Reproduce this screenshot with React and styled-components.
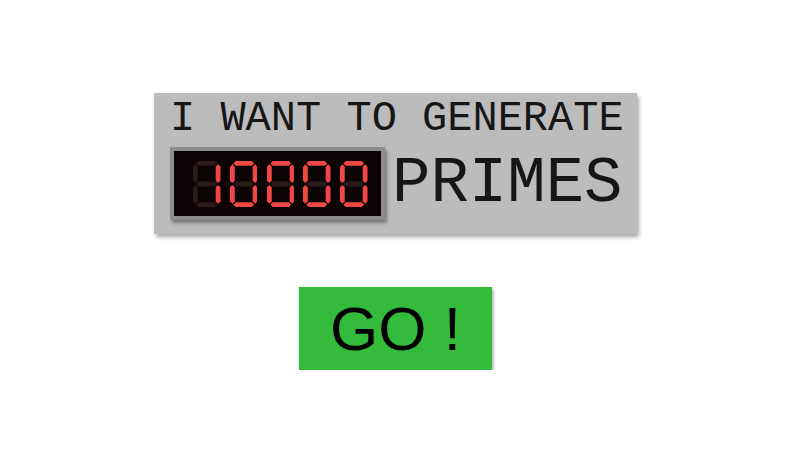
import React from 'react';
import styled, { createGlobalStyle } from 'styled-components';

const GlobalStyle = createGlobalStyle`
  body {
    margin: 0;
    background: #ffffff;
  }
`;

const Page = styled.div`
  width: 791px;
  padding-top: 93px;
  display: flex;
  flex-direction: column;
  align-items: center;
`;

const Panel = styled.div`
  width: 483px;
  box-sizing: border-box;
  padding: 5px 13px 14px 16px;
  background: #bdbcbd;
  box-shadow: 2px 3px 4px rgba(0, 0, 0, 0.35);
  font-family: "Liberation Mono", "Courier New", monospace;
  color: #161616;
`;

const Headline = styled.div`
  font-size: 42px;
  line-height: 42px;
  white-space: pre;
`;

const CountRow = styled.div`
  display: flex;
  align-items: center;
  gap: 7px;
  margin-top: 7px;
`;

const Display = styled.div`
  width: 215px;
  height: 73px;
  box-sizing: border-box;
  border: 4px solid #8e8c8d;
  background: #0c0404;
  box-shadow: 2px 3px 3px rgba(0, 0, 0, 0.35);
  display: flex;
  align-items: center;
  gap: 9.25px;
  padding-left: 19px;
`;

const Unit = styled.div`
  font-size: 64px;
  line-height: 64px;
`;

const GoButton = styled.button`
  margin-top: 53px;
  width: 193px;
  height: 83px;
  border: none;
  padding: 0;
  background: #35bb3b;
  box-shadow: 1px 2px 3px rgba(0, 0, 0, 0.4);
  display: flex;
  align-items: center;
  justify-content: center;
  font-family: "Liberation Sans", Arial, sans-serif;
  font-size: 62px;
  line-height: 1;
  color: #000;
  white-space: pre;
  cursor: pointer;
`;

// seven-segment glyph: a b c d e f g
const SEGMENTS = {
  0: 'abcdef',
  1: 'bc',
  2: 'abdeg',
  3: 'abcdg',
  4: 'bcfg',
  5: 'acdfg',
  6: 'acdefg',
  7: 'abc',
  8: 'abcdefg',
  9: 'abcdfg',
};

const W = 27.5;
const H = 46;
const T = 4.8;
const C = T / 2;
const G = 0.9;

const horiz = (x1, x2, y) =>
  `${x1 + G},${y} ${x1 + G + C},${y - C} ${x2 - G - C},${y - C} ${x2 - G},${y} ${x2 - G - C},${y + C} ${x1 + G + C},${y + C}`;

const vert = (x, y1, y2) =>
  `${x},${y1 + G} ${x + C},${y1 + G + C} ${x + C},${y2 - G - C} ${x},${y2 - G} ${x - C},${y2 - G - C} ${x - C},${y1 + G + C}`;

const SHAPES = {
  a: horiz(C, W - C, C),
  b: vert(W - C, C, H / 2),
  c: vert(W - C, H / 2, H - C),
  d: horiz(C, W - C, H - C),
  e: vert(C, H / 2, H - C),
  f: vert(C, C, H / 2),
  g: horiz(C, W - C, H / 2),
};

const Digit = ({ value }) => {
  const lit = SEGMENTS[value] || '';
  return (
    <svg width={W} height={H} viewBox={`0 0 ${W} ${H}`}>
      {Object.keys(SHAPES).map((key) => (
        <polygon
          key={key}
          points={SHAPES[key]}
          fill={lit.includes(key) ? '#ef4744' : '#2a1a1a'}
        />
      ))}
    </svg>
  );
};

const App = () => {
  const count = '10000';

  return (
    <Page>
      <GlobalStyle />
      <Panel>
        <Headline>I WANT TO GENERATE</Headline>
        <CountRow>
          <Display>
            {count.split('').map((d, i) => (
              <Digit key={i} value={d} />
            ))}
          </Display>
          <Unit>PRIMES</Unit>
        </CountRow>
      </Panel>
      <GoButton>GO !</GoButton>
    </Page>
  );
};

export default App;
